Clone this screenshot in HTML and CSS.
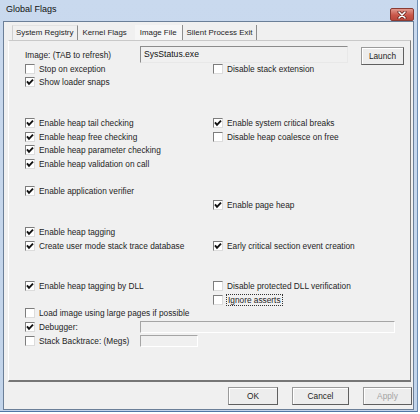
FILE: index.html
```html
<!DOCTYPE html>
<html>
<head>
<meta charset="utf-8">
<link rel="stylesheet" href="styles.css">
</head>
<body>
<div class="window">
  <div class="titlebar">
    <span class="title">Global Flags</span>
    <div class="close"><svg width="12" height="8" viewBox="0 0 12 8"><path d="M3 1 L9 7 M9 1 L3 7" stroke="#5a1a14" stroke-width="3" stroke-linecap="round"/><path d="M3 1 L9 7 M9 1 L3 7" stroke="#fff" stroke-width="1.6" stroke-linecap="round"/></svg></div>
  </div>
  <div class="client">
    <div class="tabs">
      <div class="tab sep">System Registry</div>
      <div class="tab">Kernel Flags</div>
      <div class="tab selected sep">Image File</div>
      <div class="tab sep">Silent Process Exit</div>
    </div>
    <div class="panel">
      <div class="image-row">
        <div class="image-label">Image: (TAB to refresh)</div>
        <div class="field image-field">SysStatus.exe</div>
        <div class="btn launch">Launch</div>
      </div>
      <div class="grid">
        <div class="cb"><span class="box"></span>Stop on exception</div>
        <div class="cb"><span class="box"></span>Disable stack extension</div>

        <div class="cb"><span class="box checked"></span>Show loader snaps</div>
        <div></div>

        <div></div><div></div>
        <div></div><div></div>

        <div class="cb"><span class="box checked"></span>Enable heap tail checking</div>
        <div class="cb"><span class="box checked"></span>Enable system critical breaks</div>

        <div class="cb"><span class="box checked"></span>Enable heap free checking</div>
        <div class="cb"><span class="box"></span>Disable heap coalesce on free</div>

        <div class="cb"><span class="box checked"></span>Enable heap parameter checking</div>
        <div></div>

        <div class="cb"><span class="box checked"></span>Enable heap validation on call</div>
        <div></div>

        <div></div><div></div>

        <div class="cb"><span class="box checked"></span>Enable application verifier</div>
        <div></div>

        <div></div>
        <div class="cb"><span class="box checked"></span>Enable page heap</div>

        <div></div><div></div>

        <div class="cb"><span class="box checked"></span>Enable heap tagging</div>
        <div></div>

        <div class="cb"><span class="box checked"></span>Create user mode stack trace database</div>
        <div class="cb"><span class="box checked"></span>Early critical section event creation</div>

        <div></div><div></div>
        <div></div><div></div>

        <div class="cb"><span class="box checked"></span>Enable heap tagging by DLL</div>
        <div class="cb"><span class="box"></span>Disable protected DLL verification</div>

        <div></div>
        <div class="cb"><span class="box"></span><span class="focus">Ignore asserts</span></div>

        <div class="cb wide"><span class="box"></span>Load image using large pages if possible</div>

        <div class="wide field-row">
          <div class="cb fixed"><span class="box checked"></span>Debugger:</div>
          <div class="field small debugger"></div>
        </div>

        <div class="wide field-row">
          <div class="cb fixed"><span class="box"></span>Stack Backtrace: (Megs)</div>
          <div class="field small backtrace"></div>
        </div>
      </div>
    </div>
    <div class="buttons">
      <div class="btn ok">OK</div>
      <div class="btn cancel">Cancel</div>
      <div class="btn apply">Apply</div>
    </div>
  </div>
</div>
</body>
</html>
```

FILE: styles.css
```css
html, body {
  margin: 0;
  padding: 0;
  background: #ffffff;
}
body {
  font-family: "Liberation Sans", Arial, sans-serif;
  font-size: 8.3px;
  color: #1e1e1e;
}
.window {
  width: 418px;
  height: 412px;
  box-sizing: border-box;
  background: linear-gradient(#c9d9ee, #c2d4ea);
  border-right: 1px solid #6f8fb4;
  border-bottom: 1px solid #4f77a6;
  padding: 0 3px 1px 3px;
  display: flex;
  flex-direction: column;
}
.titlebar {
  height: 21px;
  display: flex;
  align-items: center;
  justify-content: space-between;
  padding-left: 3px;
}
.title {
  font-size: 9px;
  color: #111;
  margin-top: -3px;
}
.close {
  width: 22px;
  height: 11px;
  margin-top: 8px;
  margin-right: 0;
  border: 1px solid #8a3b33;
  border-radius: 2px;
  background: linear-gradient(#e19a8f, #c9574a 55%, #b9473b);
  display: flex;
  align-items: center;
  justify-content: center;
}
.client {
  flex: 1;
  background: #f0f0f0;
  border: 1px solid #6b7f98;
  display: flex;
  flex-direction: column;
}
.tabs {
  display: flex;
  height: 15px;
  margin-top: 3px;
  margin-left: 8px;
  font-size: 7.9px;
}
.tab {
  padding: 0 4px;
  line-height: 15px;
  white-space: nowrap;
}
.tab:first-child {
  padding-left: 3px;
  border-left: 1px solid #d0d0d0;
  border-top: 1px solid #e2e2e2;
  line-height: 14px;
}
.tab.sep {
  border-right: 1px solid #8d8d8d;
}
.tab.selected {
  padding: 0 5px 0 5px;
  margin-left: 4px;
  background: #f6f6f6;
}
.panel {
  height: 342px;
  box-sizing: border-box;
  margin: 0 2px 0 4px;
  border-top: 1px solid #c9c9c9;
  border-left: 1px solid #ffffff;
  border-right: 1px solid #7c7c7c;
  border-bottom: 2px solid #767676;
  padding: 5px 0 0 16px;
}
.image-row {
  display: flex;
  align-items: center;
  height: 17px;
}
.image-label {
  width: 115px;
  flex: none;
}
.field {
  box-sizing: border-box;
  border-top: 1px solid #8c8c8c;
  border-left: 1px solid #8c8c8c;
  border-bottom: 1px solid #e8e8e8;
  border-right: 1px solid #e8e8e8;
  background: #f0f0f0;
}
.image-field {
  width: 208px;
  height: 17px;
  line-height: 15px;
  padding-left: 3px;
  color: #111;
  font-size: 8.6px;
}
.btn {
  box-sizing: border-box;
  display: flex;
  align-items: center;
  justify-content: center;
  background: #ededed;
  border: 1px solid #9a9a9a;
  border-right-color: #5f5f5f;
  border-bottom-color: #5f5f5f;
  box-shadow: inset 1px 1px 0 #ffffff;
  color: #1e1e1e;
}
.launch {
  width: 43px;
  height: 18px;
  margin-left: 13px;
  margin-top: 2px;
}
.grid {
  display: grid;
  grid-template-columns: 188px 1fr;
  grid-auto-rows: 13.6px;
  margin-top: -1px;
}
.cb {
  display: flex;
  align-items: center;
  white-space: nowrap;
}
.wide {
  grid-column: 1 / -1;
}
.box {
  width: 10px;
  height: 10px;
  box-sizing: border-box;
  flex: none;
  margin-right: 4px;
  background: #ffffff;
  border-top: 1px solid #7d7d7d;
  border-left: 1px solid #7d7d7d;
  border-right: 1px solid #dcdcdc;
  border-bottom: 1px solid #dcdcdc;
}
.box.checked {
  background: #ffffff url("data:image/svg+xml;utf8,<svg xmlns='http://www.w3.org/2000/svg' width='8' height='8' viewBox='0 0 8 8'><path d='M1 3.4 L3 5.8 L7 1.6' fill='none' stroke='%23111' stroke-width='1.9'/></svg>") no-repeat center;
}
.focus {
  outline: 1px dotted #333;
  outline-offset: 0;
  padding: 0 1px;
  line-height: 10px;
}
.field-row {
  display: flex;
  align-items: center;
}
.fixed {
  width: 115px;
  flex: none;
}
.field.small {
  height: 12px;
  border-top-color: #a5a5a5;
  border-left-color: #a5a5a5;
  border-right-color: #ffffff;
  border-bottom-color: #ffffff;
}
.debugger {
  width: 255px;
}
.backtrace {
  width: 58px;
}
.buttons {
  display: flex;
  justify-content: flex-end;
  gap: 14px;
  margin-top: 5px;
  padding-right: 1px;
}
.buttons .btn {
  height: 18px;
}
.ok { width: 50px; }
.cancel { width: 57px; }
.apply { width: 49px; color: #a3a3a3; }
```
